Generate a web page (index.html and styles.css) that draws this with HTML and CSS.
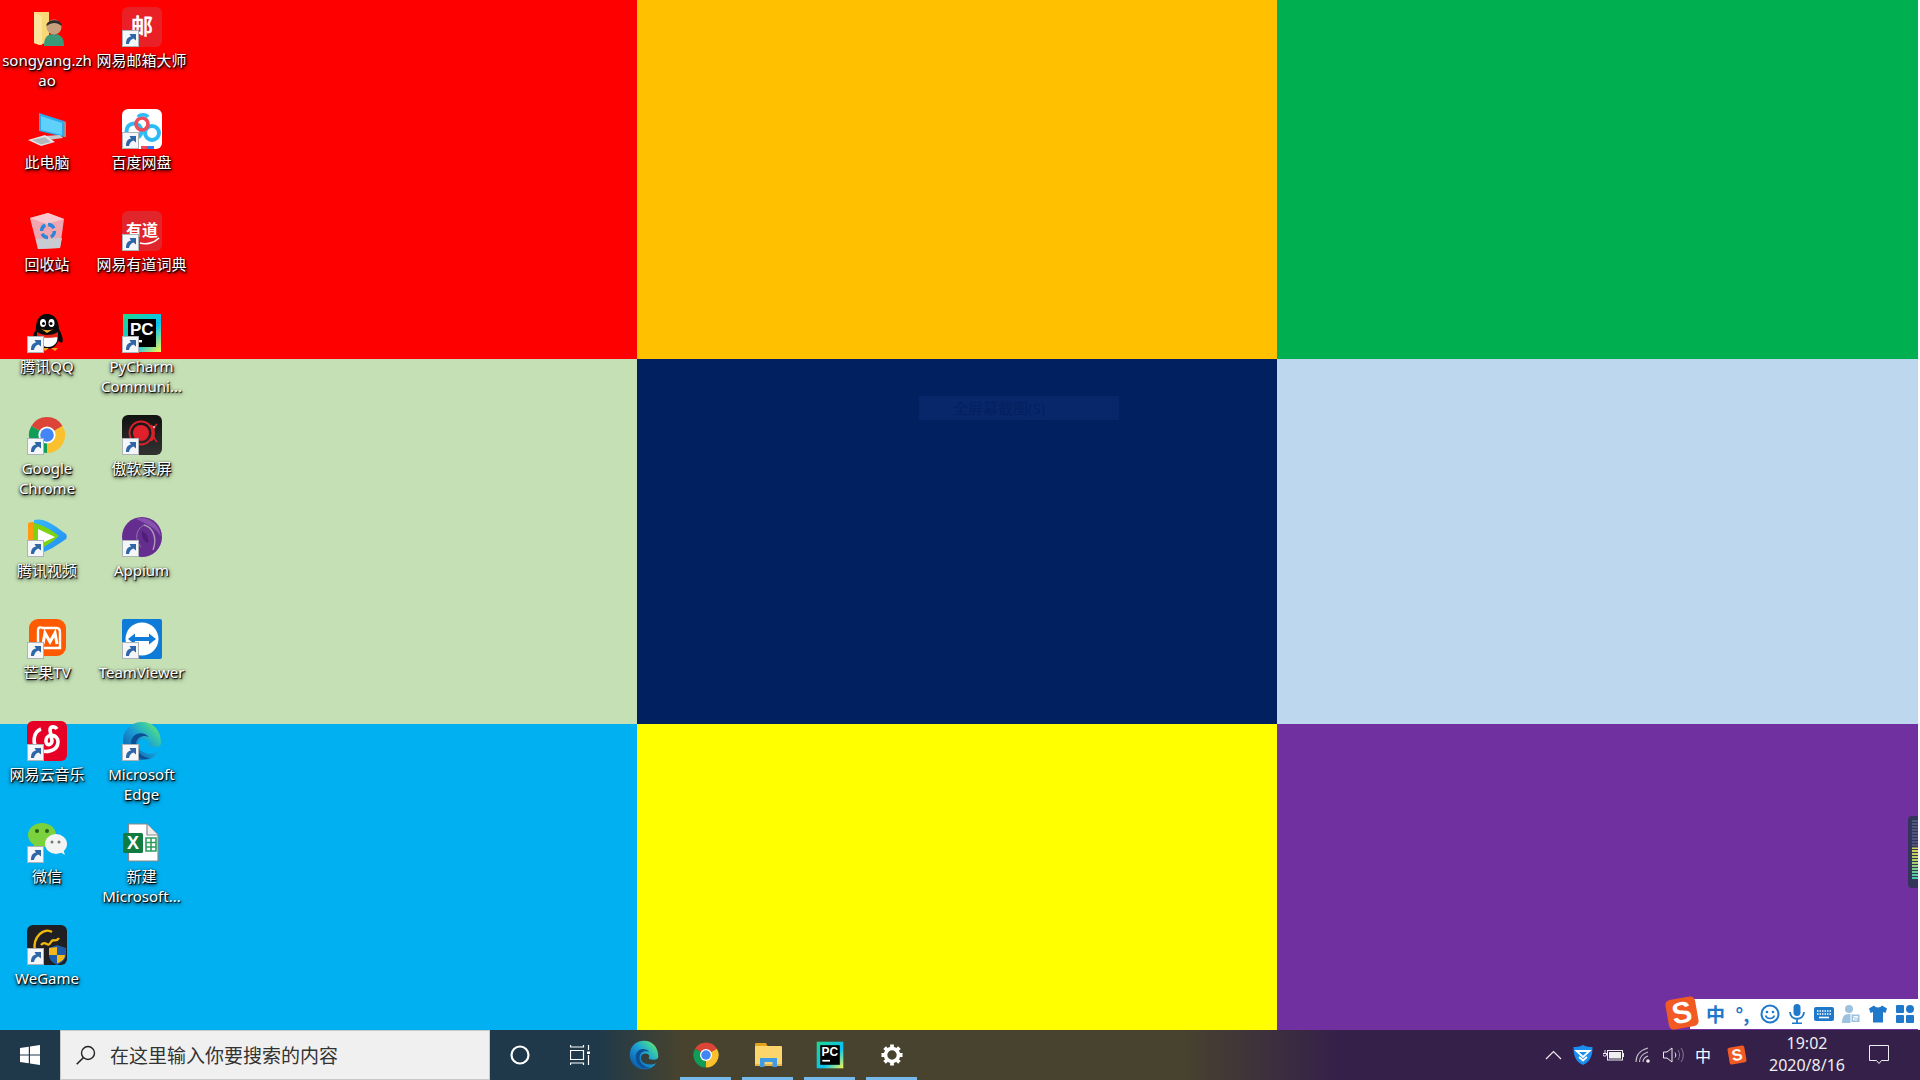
FILE: index.html
```html
<!DOCTYPE html>
<html lang="zh">
<head>
<meta charset="utf-8">
<title>Desktop</title>
<link rel="stylesheet" href="styles.css">
</head>
<body>
<svg class="sprite" aria-hidden="true">
  <defs>
    <linearGradient id="edgeMain" x1="0.1" y1="0.9" x2="0.9" y2="0.1">
      <stop offset="0" stop-color="#0c59a4"/><stop offset="0.5" stop-color="#1a9bd8"/><stop offset="0.8" stop-color="#36c8a8"/><stop offset="1" stop-color="#6ee06a"/>
    </linearGradient>
    <linearGradient id="videoBlue" x1="0" y1="0" x2="1" y2="1">
      <stop offset="0" stop-color="#38b8ff"/><stop offset="1" stop-color="#1e8df0"/>
    </linearGradient>
    <linearGradient id="pcFrame" x1="0" y1="0" x2="1" y2="1">
      <stop offset="0" stop-color="#21d789"/><stop offset="0.6" stop-color="#07c3f2"/><stop offset="1" stop-color="#fcf84a"/>
    </linearGradient>
    <linearGradient id="bgBlack" x1="0" y1="0" x2="0" y2="1">
      <stop offset="0" stop-color="#111"/><stop offset="1" stop-color="#333"/>
    </linearGradient>
    <symbol id="i-shortcut" viewBox="0 0 17 17">
      <rect x="0.5" y="0.5" width="16" height="16" fill="#f4f6f9" stroke="#aeb3b8"/>
      <path d="M4 14 C4 9 6 7 9 6.5 L7.5 4 H14 V10.5 L11.5 8.6 C9 9.5 7.5 11 7 14Z" fill="#2f66a8"/>
    </symbol>
    <symbol id="i-chrome" viewBox="0 0 40 40">
      <path d="M20 20 L35.6 11 A18 18 0 0 0 4.4 11Z" fill="#db4437"/>
      <path d="M20 20 L4.4 11 A18 18 0 0 0 20 38Z" fill="#0f9d58"/>
      <path d="M20 20 L20 38 A18 18 0 0 0 35.6 11Z" fill="#fbc02d"/>
      <circle cx="20" cy="20" r="8.6" fill="#fff"/>
      <circle cx="20" cy="20" r="6.8" fill="#4285f4"/>
    </symbol>
    <symbol id="i-edge" viewBox="0 0 40 40">
      <path d="M39 22 C39 9 31 1 20 1 C9 1 1 9 1 20 C1 31 10 39 21 39 C28 39 33 36 36 31 C30 34 22 33 18 29 C14 24 16 18 22 18 C27 18 28 22 26 25 C32 27 39 27 39 22Z" fill="url(#edgeMain)"/>
      <path d="M9 21 C10 12 21 9 27 16 C20 13 14 17 14 24 C14 31 21 37 28 37 C18 41 8 32 9 21Z" fill="#0b4f95"/>
    </symbol>
    <symbol id="i-pycharm" viewBox="0 0 40 40">
      <rect x="1" y="1" width="38" height="38" fill="url(#pcFrame)"/>
      <rect x="6" y="6" width="28" height="28" fill="#000"/>
      <text x="8" y="22" class="pc-letters">PC</text>
      <rect x="9" y="27" width="11" height="2.4" fill="#fff"/>
    </symbol>
  </defs>
</svg>

<div class="screen">
  <main class="wallpaper">
    <div class="tile red"></div>
    <div class="tile orange"></div>
    <div class="tile green"></div>
    <div class="tile pale-green"></div>
    <div class="tile navy">
      <div class="ghost-tip"><span>全屏幕截图(S)</span></div>
    </div>
    <div class="tile pale-blue"></div>
    <div class="tile sky"></div>
    <div class="tile yellow"></div>
    <div class="tile purple"></div>
  </main>

  <section class="desktop">
    <div class="item">
      <div class="icon">
        <svg viewBox="0 0 40 40"><path d="M7 5 H22 V35 L12 38 L7 36Z" fill="#f8d776"/><path d="M7 5 L15 9 V38 L7 36Z" fill="#fbe49b"/><path d="M17 38 C17 30 21 27 27 27 C33 27 37 30 37 39 H17Z" fill="#3a9a78"/><circle cx="27" cy="20" r="7.5" fill="#c8a07e"/><path d="M19.5 19 C19 12 35 11 34.5 19 C30 15 25 15 19.5 19Z" fill="#2b2b2b"/></svg>
      </div>
      <div class="label">songyang.zhao</div>
    </div>
    <div class="item">
      <div class="icon shortcut">
        <svg viewBox="0 0 40 40"><rect width="40" height="40" rx="6" fill="#ea2027"/><text x="20" y="27" class="glyph mail-glyph">邮</text></svg>
        <svg class="arrow"><use href="#i-shortcut"/></svg>
      </div>
      <div class="label">网易邮箱大师</div>
    </div>

    <div class="item">
      <div class="icon">
        <svg viewBox="0 0 40 40"><path d="M12 4 L37 12 V28 L12 22Z" fill="#2fa8ea"/><path d="M14 7 L35 14 V26 L14 21Z" fill="#5fd0fa"/><path d="M37 12 L39 13 V28 L37 28Z" fill="#8a97a3"/><path d="M17 27 L33 26 L36 29 L21 31Z" fill="#c4c9cd"/><path d="M1 31 L18 26 L28 33 L14 37Z" fill="#e4e6e8"/><path d="M5 31 L18 28 L24 33 L14 35.5Z" fill="#b2b7bc"/></svg>
      </div>
      <div class="label">此电脑</div>
    </div>
    <div class="item">
      <div class="icon shortcut">
        <svg viewBox="0 0 40 40"><rect width="40" height="40" rx="6" fill="#fff"/><circle cx="12" cy="22" r="7.5" fill="none" stroke="#2dbbf5" stroke-width="4"/><circle cx="30" cy="24" r="7" fill="none" stroke="#2dbbf5" stroke-width="4"/><circle cx="20" cy="15" r="6" fill="none" stroke="#ef4d5a" stroke-width="3.6"/><path d="M16 8 C18 5 24 5 26 8" fill="none" stroke="#2dbbf5" stroke-width="3.4"/><rect x="19" y="37" width="6" height="3" fill="#ef4d5a"/><rect x="25" y="37" width="7" height="3" fill="#2d7bf5"/></svg>
        <svg class="arrow"><use href="#i-shortcut"/></svg>
      </div>
      <div class="label">百度网盘</div>
    </div>

    <div class="item">
      <div class="icon">
        <svg viewBox="0 0 40 40"><path d="M3 7 L21 2 L37 8 L33 37 L11 38Z" fill="#f0a6b0"/><path d="M3 7 L21 2 L37 8 L20 13Z" fill="#f8c6cc"/><path d="M9 28 L35 27 L33 37 L11 38Z" fill="#c8ccd2"/><circle cx="21" cy="20" r="6.5" fill="none" stroke="#2a86d8" stroke-width="3.4" stroke-dasharray="7 3"/></svg>
      </div>
      <div class="label">回收站</div>
    </div>
    <div class="item">
      <div class="icon shortcut">
        <svg viewBox="0 0 40 40"><rect width="40" height="40" rx="6" fill="#e0262b"/><text x="20" y="25" class="glyph youdao-glyph">有道</text><path d="M18 32 C24 34 32 32 37 27" fill="none" stroke="#fff" stroke-width="1.6"/></svg>
        <svg class="arrow"><use href="#i-shortcut"/></svg>
      </div>
      <div class="label">网易有道词典</div>
    </div>

    <div class="item">
      <div class="icon shortcut">
        <svg viewBox="0 0 40 40"><path d="M20 1 C10 1 9 11 9 16 C6 22 4 27 6 30 L10 28 C12 34 16 36 20 36 C25 36 29 34 31 28 L35 30 C37 27 35 22 32 16 C32 11 30 1 20 1Z" fill="#0a0a0a"/><path d="M12 22 C16 25 25 25 30 22 C32 28 28 34 21 34 C14 34 10 29 12 22Z" fill="#fff"/><ellipse cx="16" cy="10" rx="3" ry="4" fill="#fff"/><ellipse cx="24.5" cy="10" rx="3" ry="4" fill="#fff"/><circle cx="16.5" cy="10.5" r="1.5"/><circle cx="24" cy="10.5" r="1.5"/><path d="M13 15 C17 18 24 18 28 15 L20 20Z" fill="#f5b21a"/><path d="M10 19 C16 23 25 23 31 19 L31 24 C26 25 16 25 10 24Z" fill="#e2231a"/><path d="M14 35 H22 L18 38Z M24 35 H31 L28 38Z" fill="#f5a21a"/></svg>
        <svg class="arrow"><use href="#i-shortcut"/></svg>
      </div>
      <div class="label">腾讯QQ</div>
    </div>
    <div class="item">
      <div class="icon shortcut">
        <svg><use href="#i-pycharm"/></svg>
        <svg class="arrow"><use href="#i-shortcut"/></svg>
      </div>
      <div class="label">PyCharm Communi...</div>
    </div>

    <div class="item">
      <div class="icon shortcut">
        <svg><use href="#i-chrome"/></svg>
        <svg class="arrow"><use href="#i-shortcut"/></svg>
      </div>
      <div class="label">Google Chrome</div>
    </div>
    <div class="item">
      <div class="icon shortcut">
        <svg viewBox="0 0 40 40"><rect width="40" height="40" rx="6" fill="url(#bgBlack)"/><circle cx="19" cy="18" r="8" fill="#e0202a"/><circle cx="19" cy="18" r="11.5" fill="none" stroke="#e0202a" stroke-width="1.8"/><path d="M29 10 C33 14 33 22 29 26 M35 9 C30 14 30 22 35 27" fill="none" stroke="#e0202a" stroke-width="1.6"/><circle cx="32" cy="12" r="1" fill="#ddd"/></svg>
        <svg class="arrow"><use href="#i-shortcut"/></svg>
      </div>
      <div class="label">傲软录屏</div>
    </div>

    <div class="item">
      <div class="icon shortcut">
        <svg viewBox="0 0 40 40"><path d="M7 3 C15 1 22 4 39 17 C40 18 40 21 39 22 C25 32 15 37 7 37Z" fill="url(#videoBlue)"/><path d="M1 7 C1 5 6 5 7 5 V35 C5 35 1 35 1 32Z" fill="#ff9a12"/><path d="M6 6 C14 7 23 12 32 19 C23 27 14 32 6 34Z" fill="#7dd30f"/><path d="M11 12 L28 20 L11 28Z" fill="#fff"/></svg>
        <svg class="arrow"><use href="#i-shortcut"/></svg>
      </div>
      <div class="label">腾讯视频</div>
    </div>
    <div class="item">
      <div class="icon shortcut">
        <svg viewBox="0 0 40 40"><circle cx="20" cy="20" r="20" fill="#662d91"/><path d="M14 2 C24 -2 38 6 39 20 C34 10 24 7 14 2Z" fill="#8551ad"/><path d="M22 8 C30 10 36 20 31 33" fill="none" stroke="#a99ab5" stroke-width="1.4"/><path d="M22 8 C14 12 12 22 19 30" fill="none" stroke="#8f7aa5" stroke-width="1"/><path d="M20 14 C24 16 27 20 26 26 C22 25 19 20 20 14Z" fill="#4f1f78"/></svg>
        <svg class="arrow"><use href="#i-shortcut"/></svg>
      </div>
      <div class="label">Appium</div>
    </div>

    <div class="item">
      <div class="icon shortcut">
        <svg viewBox="0 0 40 40"><rect x="2" width="37" height="37" rx="9" fill="#ff5a00"/><path d="M11 29 V11 C11 8 14 8 16 9 H30 C33 9 33 12 33 14 V29 H11Z" fill="none" stroke="#fff" stroke-width="2.4"/><path d="M16 25 L18 14 L23 23 L28 14 L30 25" fill="none" stroke="#fff" stroke-width="3"/></svg>
        <svg class="arrow"><use href="#i-shortcut"/></svg>
      </div>
      <div class="label">芒果TV</div>
    </div>
    <div class="item">
      <div class="icon shortcut">
        <svg viewBox="0 0 40 40"><rect width="40" height="40" rx="2" fill="#0e7bd8"/><circle cx="20" cy="20" r="16.5" fill="#fff"/><path d="M6 20 L13 14.5 V18 H27 V14.5 L34 20 L27 25.5 V22 H13 V25.5Z" fill="#0e7bd8"/></svg>
        <svg class="arrow"><use href="#i-shortcut"/></svg>
      </div>
      <div class="label">TeamViewer</div>
    </div>

    <div class="item">
      <div class="icon shortcut">
        <svg viewBox="0 0 40 40"><rect width="40" height="40" rx="6" fill="#e60026"/><path d="M14 8 C6 11 5 23 11 28 C18 33 31 30 31 21 C31 13 20 12 19 19 C18 25 25 25 25 20 L23 9 C23 5 28 5 30 8" fill="none" stroke="#fff" stroke-width="3.6"/></svg>
        <svg class="arrow"><use href="#i-shortcut"/></svg>
      </div>
      <div class="label">网易云音乐</div>
    </div>
    <div class="item">
      <div class="icon shortcut">
        <svg><use href="#i-edge"/></svg>
        <svg class="arrow"><use href="#i-shortcut"/></svg>
      </div>
      <div class="label">Microsoft Edge</div>
    </div>

    <div class="item">
      <div class="icon shortcut">
        <svg viewBox="0 0 40 40"><ellipse cx="15" cy="12" rx="14" ry="12" fill="#7bd23c"/><path d="M7 20 L6 30 L14 23Z" fill="#7bd23c"/><circle cx="10" cy="8" r="2" fill="#26601a"/><circle cx="20" cy="8" r="2" fill="#26601a"/><ellipse cx="29" cy="21" rx="11" ry="10" fill="#f2f4f4"/><path d="M33 29 L38 32 L36 26Z" fill="#f2f4f4"/><circle cx="25" cy="19" r="1.5" fill="#777"/><circle cx="32" cy="19" r="1.5" fill="#777"/></svg>
        <svg class="arrow"><use href="#i-shortcut"/></svg>
      </div>
      <div class="label">微信</div>
    </div>
    <div class="item">
      <div class="icon">
        <svg viewBox="0 0 40 40"><path d="M6.5 1 H25 L36 12 V38 H6.5Z" fill="#fff" stroke="#8a8a8a" stroke-width="1.2"/><path d="M25 1 V12 H36" fill="#eee" stroke="#8a8a8a" stroke-width="1.2"/><rect x="1" y="10" width="20" height="20" rx="1.5" fill="#107c41"/><text x="11" y="26" class="excel-x">X</text><path d="M24 15 H34 V28 H24Z M24 19.5 H34 M24 24 H34 M29 15 V28" fill="none" stroke="#2d9d60" stroke-width="1.6"/></svg>
      </div>
      <div class="label">新建 Microsoft...</div>
    </div>

    <div class="item">
      <div class="icon shortcut">
        <svg viewBox="0 0 40 40"><rect width="40" height="40" rx="6" fill="#1f1f24"/><path d="M8 26 C5 12 17 2 25 7 M14 20 C19 14 20 24 24 17 C26 13 29 18 32 13" fill="none" stroke="#f0b90b" stroke-width="2.4"/><path d="M30 20 L39 23 V30 C39 35 34 38 30 40 C26 38 22 35 22 30 V23Z" fill="#1c5ba8"/><path d="M30 22 V30 H22 V23Z M30 30 H38 C38 35 33 37 30 38.5Z" fill="#f4b81c"/></svg>
        <svg class="arrow"><use href="#i-shortcut"/></svg>
      </div>
      <div class="label">WeGame</div>
    </div>
  </section>

  <div class="meter"><div class="meter-bars"></div></div>

  <div class="ime-bar">
    <svg class="ime-logo" viewBox="0 0 36 36"><rect x="3" y="3" width="30" height="30" rx="5" fill="#f15a22" transform="rotate(-10 18 18)"/><text x="18" y="28" class="ime-s" transform="rotate(-10 18 18)">S</text></svg>
    <span class="ime-slot ime-char">中</span>
    <span class="ime-slot ime-char">°,</span>
    <span class="ime-slot"><svg viewBox="0 0 20 20"><circle cx="10" cy="10" r="8.5" fill="none" stroke="#1f78c9" stroke-width="2"/><circle cx="7" cy="8" r="1.3" fill="#1f78c9"/><circle cx="13" cy="8" r="1.3" fill="#1f78c9"/><path d="M5.5 11.5 C7 15.5 13 15.5 14.5 11.5" fill="none" stroke="#1f78c9" stroke-width="1.6"/></svg></span>
    <span class="ime-slot"><svg viewBox="0 0 20 20"><rect x="6.5" y="0" width="7" height="12" rx="3.5" fill="#1f78c9"/><path d="M3 8 C3 17 17 17 17 8 M10 15 V19 M5 19.5 H15" fill="none" stroke="#1f78c9" stroke-width="1.8"/></svg></span>
    <span class="ime-slot"><svg viewBox="0 0 20 20"><rect y="3" width="20" height="14" rx="2" fill="#1f78c9"/><path d="M3 7 H17 M3 10 H17" stroke="#fff" stroke-width="1.6" stroke-dasharray="1.5 1"/><path d="M5 13.5 H15" stroke="#fff" stroke-width="1.6"/></svg></span>
    <span class="ime-slot"><svg viewBox="0 0 20 20"><circle cx="8" cy="5" r="4" fill="#9cc2e0"/><path d="M1 19 C1 12 4 10 8 10 H11 V19Z" fill="#9cc2e0"/><rect x="10" y="10" width="9" height="8.5" fill="#9cc2e0" stroke="#fff"/><path d="M12.5 12.5 H16.5 V14 H12.5 V16 H16.5" fill="none" stroke="#fff"/></svg></span>
    <span class="ime-slot"><svg viewBox="0 0 20 20"><path d="M6 1.5 L1 4.5 L2.5 9 L5 8 V18.5 H15 V8 L17.5 9 L19 4.5 L14 1.5 C12.5 4 7.5 4 6 1.5Z" fill="#1f78c9"/></svg></span>
    <span class="ime-slot"><svg viewBox="0 0 20 20"><rect x="1" y="1" width="8" height="8" rx="1" fill="#1f78c9"/><rect x="11" y="1" width="8" height="8" rx="4" fill="#1f78c9"/><rect x="1" y="11" width="8" height="8" rx="1" fill="#1f78c9"/><rect x="11" y="11" width="8" height="8" rx="1" fill="#1f78c9"/></svg></span>
  </div>

  <footer class="taskbar">
    <div class="start">
      <svg viewBox="0 0 20 20"><path d="M0 3 L8.8 1.7 V9.5 H0Z M10 1.5 L20 0 V9.5 H10Z M0 10.5 H8.8 V18.3 L0 17Z M10 10.5 H20 V20 L10 18.5Z" fill="#fff"/></svg>
    </div>
    <div class="search">
      <svg viewBox="0 0 20 20"><circle cx="12" cy="8" r="6.5" fill="none" stroke="#222" stroke-width="1.4"/><path d="M7.5 12.5 L0.7 19.3" stroke="#222" stroke-width="1.6"/></svg>
      <span>在这里输入你要搜索的内容</span>
    </div>
    <div class="task-item first">
      <svg class="cortana" viewBox="0 0 20 20"><circle cx="10" cy="10" r="8.5" fill="none" stroke="#fff" stroke-width="2.2"/></svg>
    </div>
    <div class="task-item">
      <svg class="taskview" viewBox="0 0 20 20"><path d="M0.5 0 V2 H13.5 V0 M0.5 5.5 H13.5 V14.5 H0.5Z M0.5 20 V18 H13.5 V20 M18.5 0 V5 M18.5 10 V20" fill="none" stroke="#fff" stroke-width="1.2"/><rect x="17" y="6.5" width="3" height="2.5" fill="#fff"/></svg>
    </div>
    <div class="task-item"><svg class="app-edge"><use href="#i-edge"/></svg></div>
    <div class="task-item running"><svg class="app-icon"><use href="#i-chrome"/></svg></div>
    <div class="task-item running">
      <svg class="app-icon" viewBox="0 0 28 28"><path d="M1 3 C1 2 2 2 3 2 H12 L14 6 H1Z" fill="#e2a21c"/><rect x="1" y="5" width="27" height="20" rx="1" fill="#fcd56c"/><path d="M1 23 H28 V25 H1Z" fill="#e8b548"/><path d="M6 26 V17 H23 V26 H18.5 V21 H10.5 V26Z" fill="#3f9be4"/></svg>
    </div>
    <div class="task-item running"><svg class="app-icon"><use href="#i-pycharm"/></svg></div>
    <div class="task-item running">
      <svg class="app-gear" viewBox="0 0 24 24"><circle cx="12" cy="12" r="6.5" fill="none" stroke="#fff" stroke-width="3.6"/><path d="M12 1.5 V5 M12 19 V22.5 M1.5 12 H5 M19 12 H22.5 M4.6 4.6 L7 7 M17 17 L19.4 19.4 M4.6 19.4 L7 17 M17 7 L19.4 4.6" stroke="#fff" stroke-width="3.8"/></svg>
    </div>

    <div class="tray">
      <div class="tray-slot"><svg width="17" height="10" viewBox="0 0 17 10"><path d="M1 9 L8.5 1.5 L16 9" fill="none" stroke="#eee" stroke-width="1.2"/></svg></div>
      <div class="tray-slot"><svg width="20" height="20" viewBox="0 0 20 20"><path d="M10 0 C6 2 3 2 0.5 2 C0.5 10 2 16 10 20 C18 16 19.5 10 19.5 2 C17 2 14 2 10 0Z" fill="#1a8ff0"/><path d="M3.5 6 H16.5 L10 12Z M6 12 L10 15.5 L14 12" fill="none" stroke="#fff" stroke-width="1.8"/></svg></div>
      <div class="tray-slot"><svg width="21" height="14" viewBox="0 0 21 14"><rect x="4.5" y="2.5" width="15" height="9.5" fill="none" stroke="#eee"/><rect x="6" y="4" width="12" height="6.5" fill="#eee"/><rect x="20" y="5" width="1" height="4" fill="#eee"/><path d="M0 5.5 H4 M2 2 V5 M0 5 V7 C0 8.5 3.5 8.5 3.5 7 V5" fill="none" stroke="#eee"/></svg></div>
      <div class="tray-slot"><svg width="16" height="16" viewBox="0 0 16 16"><path d="M1 15 C1 8 6 3 13 1 M4.5 15 C4.5 10 8 6.5 13 5 M8 15 C8 12 10 10 13 9" fill="none" stroke="#c8c4cc" stroke-width="1.1"/><circle cx="13" cy="14" r="1.8" fill="#eee"/></svg></div>
      <div class="tray-slot"><svg width="21" height="16" viewBox="0 0 21 16"><path d="M0.5 5 H4 L9 1 V15 L4 11 H0.5Z" fill="none" stroke="#eee"/><path d="M12 5.5 C13 7 13 9 12 10.5" fill="none" stroke="#eee"/><path d="M15 3 C17 6 17 10 15 13 M18 1 C21 5 21 11 18 15" fill="none" stroke="#8a7f96"/></svg></div>
      <div class="tray-slot tray-char">中</div>
      <div class="tray-slot tray-sogou"><svg width="20" height="20" viewBox="0 0 20 20"><rect x="1.5" y="1.5" width="17" height="17" rx="2" fill="#f15a22" transform="rotate(-10 10 10)"/><text x="10" y="15.5" class="tray-s" transform="rotate(-10 10 10)">S</text></svg></div>
      <div class="clock"><span>19:02</span><span>2020/8/16</span></div>
      <div class="tray-note"><svg width="20" height="20" viewBox="0 0 20 20"><path d="M0.5 0.5 H19.5 V15.5 H12.5 L10 18.5 L7.5 15.5 H0.5Z" fill="none" stroke="#eee"/></svg></div>
    </div>
  </footer>
</div>
</body>
</html>
```

FILE: styles.css
```css
html, body {
    margin: 0;
    padding: 0;
    overflow: hidden;
}
body {
    font-family: "Noto Sans", "Noto Sans CJK SC", sans-serif;
    background-color: #fff;
}
.sprite {
    position: absolute;
    width: 0;
    height: 0;
}
.screen {
    position: relative;
    width: 1920px;
    height: 1080px;
    overflow: hidden;
}

/* wallpaper: the nine slide colours */
.wallpaper {
    display: grid;
    grid-template-columns: 637px 640px 641px;
    grid-template-rows: 359px 365px 356px;
    height: 100%;
}
.tile { position: relative; }
.red { background-color: #ff0000; }
.orange { background-color: #ffc000; }
.green { background-color: #00b050; }
.pale-green { background-color: #c5e0b4; }
.navy { background-color: #002060; }
.pale-blue { background-color: #bdd7ee; }
.sky { background-color: #00b0f0; }
.yellow { background-color: #ffff00; }
.purple { background-color: #7030a0; }

.ghost-tip {
    position: absolute;
    left: 282px;
    top: 37px;
    width: 200px;
    height: 24px;
    padding-left: 34px;
    box-sizing: border-box;
    background-color: #08276a;
    color: #03205f;
    font-size: 15px;
    line-height: 24px;
}

/* desktop icons */
.desktop {
    position: absolute;
    left: 0;
    top: 7px;
    display: grid;
    grid-template-columns: 94px 95px;
    grid-auto-rows: 102px;
}
.item {
    display: flex;
    flex-direction: column;
    align-items: center;
}
.icon {
    position: relative;
    width: 40px;
    height: 40px;
    flex: none;
}
.icon svg {
    display: block;
    width: 40px;
    height: 40px;
}
.icon .arrow {
    position: absolute;
    left: 0;
    bottom: 0;
    width: 17px;
    height: 17px;
}
.label {
    width: 92px;
    margin-top: 3px;
    color: #fff;
    font-size: 15px;
    line-height: 20px;
    text-align: center;
    overflow-wrap: anywhere;
    text-shadow: 1px 1px 1px #000, 0 1px 3px rgba(0, 0, 0, 0.9), 1px 2px 4px rgba(0, 0, 0, 0.6);
}
.glyph {
    fill: #fff;
    font-family: "Noto Sans CJK SC", sans-serif;
    font-weight: 700;
    text-anchor: middle;
}
.mail-glyph { font-size: 22px; }
.youdao-glyph { font-size: 16px; }
.pc-letters {
    fill: #fff;
    font-family: "Liberation Sans", sans-serif;
    font-size: 17px;
    font-weight: 700;
}
.excel-x {
    fill: #fff;
    font-family: "Liberation Sans", sans-serif;
    font-size: 18px;
    font-weight: 700;
    text-anchor: middle;
}

/* level meter stuck to the right edge */
.meter {
    position: absolute;
    right: 2px;
    top: 816px;
    width: 10px;
    height: 72px;
    padding: 4px 0 0 4px;
    box-sizing: border-box;
    background-color: #33365a;
    border-radius: 4px 0 0 4px;
}
.meter-bars {
    height: 60px;
    background:
        repeating-linear-gradient(to bottom, transparent 0, transparent 2px, #33365a 2px, #33365a 3px),
        linear-gradient(to bottom, #50557c 0, #50557c 45%, #d8d050 47%, #a8cf6e 70%, #38c8b0 100%);
}

/* sogou input bar */
.ime-bar {
    position: absolute;
    left: 1690px;
    top: 999px;
    width: 230px;
    height: 30px;
    padding-left: 12px;
    box-sizing: border-box;
    display: flex;
    align-items: center;
    background-color: #fff;
}
.ime-logo {
    position: absolute;
    left: -26px;
    top: -4px;
    width: 36px;
    height: 36px;
}
.ime-s {
    fill: #fff;
    font-family: "Liberation Sans", sans-serif;
    font-size: 30px;
    font-weight: 700;
    text-anchor: middle;
}
.ime-slot {
    width: 27px;
    flex: none;
    display: flex;
    justify-content: center;
}
.ime-slot svg {
    width: 20px;
    height: 20px;
}
.ime-char {
    color: #1f78c9;
    font-family: "Noto Sans CJK SC", sans-serif;
    font-size: 19px;
    font-weight: 700;
    line-height: 30px;
}

/* taskbar */
.taskbar {
    position: absolute;
    left: 0;
    right: 0;
    bottom: 0;
    height: 50px;
    display: flex;
    align-items: stretch;
    background: linear-gradient(to right,
        #20394a 0, #20394a 600px, #48432e 680px, #48432e 1180px,
        #35204a 1340px, #35204a 100%);
}
.start {
    width: 60px;
    flex: none;
    display: flex;
    align-items: center;
    justify-content: center;
}
.start svg {
    width: 20px;
    height: 20px;
}
.search {
    width: 430px;
    flex: none;
    box-sizing: border-box;
    display: flex;
    align-items: center;
    gap: 14px;
    padding-left: 15px;
    background-color: #f0f0f0;
    border: 1px solid #c8c8c8;
    color: #333;
    font-size: 19px;
}
.search svg {
    width: 20px;
    height: 20px;
}
.task-item {
    position: relative;
    width: 62px;
    flex: none;
    display: flex;
    align-items: center;
    justify-content: center;
}
.task-item.first { width: 61px; }
.task-item.running::after {
    content: "";
    position: absolute;
    left: 5px;
    right: 6px;
    bottom: 0;
    height: 3px;
    background-color: #76b9ed;
}
.cortana { width: 20px; height: 20px; margin-right: 1px; }
.taskview { width: 20px; height: 20px; margin-right: 4px; }
.app-edge { width: 30px; height: 30px; }
.app-icon { width: 28px; height: 28px; }
.app-gear { width: 24px; height: 24px; }

.tray {
    margin-left: auto;
    padding-right: 20px;
    display: flex;
    align-items: stretch;
}
.tray-slot {
    width: 30px;
    display: flex;
    align-items: center;
    justify-content: center;
}
.tray-char {
    color: #fff;
    font-family: "Noto Sans CJK SC", sans-serif;
    font-size: 16px;
}
.tray-sogou { width: 38px; }
.tray-s {
    fill: #fff;
    font-family: "Liberation Sans", sans-serif;
    font-size: 16px;
    font-weight: 700;
    text-anchor: middle;
}
.clock {
    width: 102px;
    display: flex;
    flex-direction: column;
    align-items: center;
    justify-content: center;
    gap: 2px;
    padding-bottom: 2px;
    box-sizing: border-box;
    color: #eee;
    font-size: 16px;
    line-height: 20px;
}
.tray-note {
    width: 42px;
    display: flex;
    align-items: center;
    justify-content: center;
}
```
